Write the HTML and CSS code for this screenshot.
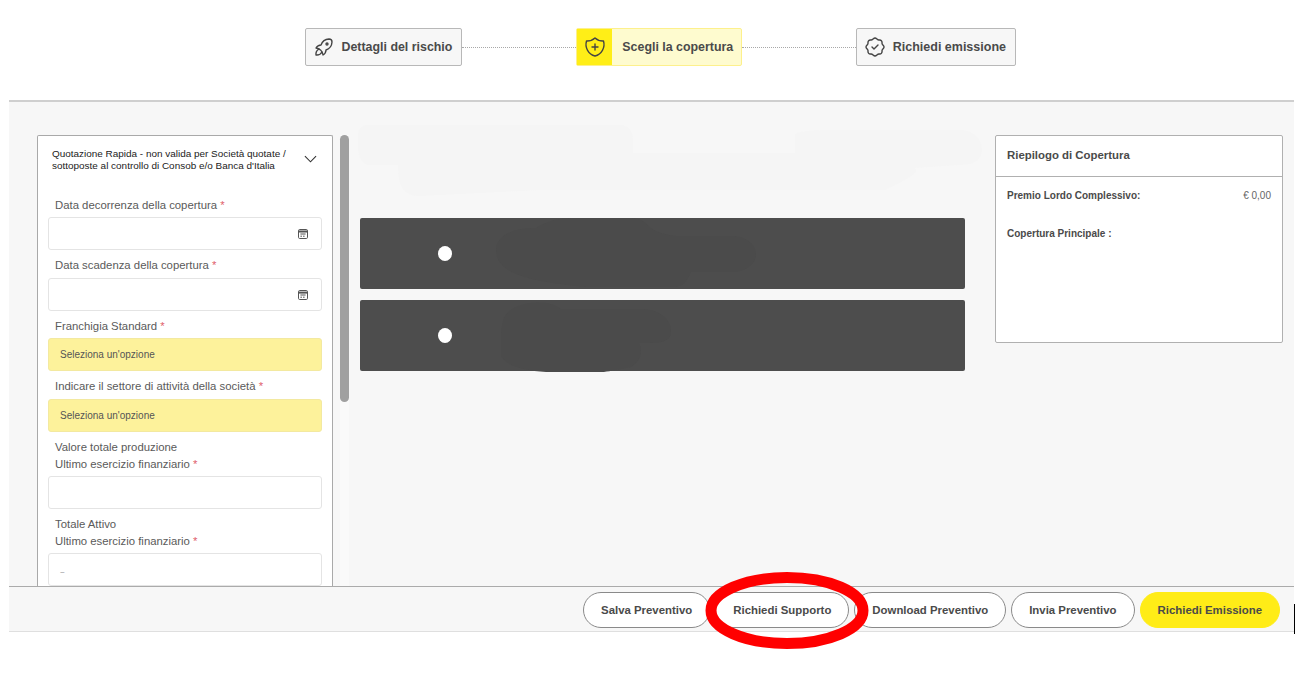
FILE: index.html
```html
<!DOCTYPE html>
<html lang="it">
<head>
<meta charset="utf-8">
<title>Scegli la copertura</title>
<link rel="stylesheet" href="styles.css">
</head>
<body>
<div class="page">
  <nav class="stepper">
    <div class="step">
      <svg class="step-icon" viewBox="0 0 24 24"><path d="M4 13a8 8 0 0 1 7 7a6 6 0 0 0 3 -5a9 9 0 0 0 6 -8a3 3 0 0 0 -3 -3a9 9 0 0 0 -8 6a6 6 0 0 0 -5 3"/><path d="M7 14a6 6 0 0 0 -3 6a6 6 0 0 0 6 -3"/><circle cx="15" cy="9" r="1"/></svg>
      <span>Dettagli del rischio</span>
    </div>
    <div class="connector"></div>
    <div class="step step-active">
      <div class="step-badge">
        <svg class="step-icon" viewBox="0 0 24 24"><path d="M12 3a12 12 0 0 0 8.5 3a12 12 0 0 1 -8.5 15a12 12 0 0 1 -8.5 -15a12 12 0 0 0 8.5 -3"/><path d="M9 12h6M12 9v6"/></svg>
      </div>
      <span>Scegli la copertura</span>
    </div>
    <div class="connector"></div>
    <div class="step step-last">
      <svg class="step-icon" viewBox="0 0 24 24"><path d="M5 7.2a2.2 2.2 0 0 1 2.2 -2.2h1a2.2 2.2 0 0 0 1.55 -.64l.7 -.7a2.2 2.2 0 0 1 3.12 0l.7 .7c.412 .41 .97 .64 1.55 .64h1a2.2 2.2 0 0 1 2.2 2.2v1c0 .58 .23 1.138 .64 1.55l.7 .7a2.2 2.2 0 0 1 0 3.12l-.7 .7a2.2 2.2 0 0 0 -.64 1.55v1a2.2 2.2 0 0 1 -2.2 2.2h-1a2.2 2.2 0 0 0 -1.55 .64l-.7 .7a2.2 2.2 0 0 1 -3.12 0l-.7 -.7a2.2 2.2 0 0 0 -1.55 -.64h-1a2.2 2.2 0 0 1 -2.2 -2.2v-1a2.2 2.2 0 0 0 -.64 -1.55l-.7 -.7a2.2 2.2 0 0 1 0 -3.12l.7 -.7a2.2 2.2 0 0 0 .64 -1.55v-1"/><path d="M9 12l2 2l4 -4"/></svg>
      <span>Richiedi emissione</span>
    </div>
  </nav>

  <main class="main">
    <section class="panel">
      <header class="panel-head">
        <p class="panel-title">Quotazione Rapida - non valida per Società quotate / sottoposte al controllo di Consob e/o Banca d'Italia</p>
        <svg class="chevron" viewBox="0 0 14 8"><path d="M1 1l6 6l6 -6"/></svg>
      </header>
      <div class="field">
        <label class="label">Data decorrenza della copertura <em>*</em></label>
        <div class="input">
          <svg class="cal" viewBox="0 0 10 10"><rect x="0.5" y="0.5" width="9" height="9" rx="1.2"/><path class="cal-band" d="M0.5 2.6h9"/><path d="M2.4 5h5.2M2.4 7.2h1.6M5 7.2h1.6"/></svg>
        </div>
      </div>
      <div class="field">
        <label class="label">Data scadenza della copertura <em>*</em></label>
        <div class="input">
          <svg class="cal" viewBox="0 0 10 10"><rect x="0.5" y="0.5" width="9" height="9" rx="1.2"/><path class="cal-band" d="M0.5 2.6h9"/><path d="M2.4 5h5.2M2.4 7.2h1.6M5 7.2h1.6"/></svg>
        </div>
      </div>
      <div class="field">
        <label class="label">Franchigia Standard <em>*</em></label>
        <div class="input select">Seleziona un'opzione</div>
      </div>
      <div class="field">
        <label class="label">Indicare il settore di attività della società <em>*</em></label>
        <div class="input select">Seleziona un'opzione</div>
      </div>
      <div class="field field-tall">
        <label class="label">Valore totale produzione<br>Ultimo esercizio finanziario <em>*</em></label>
        <div class="input"></div>
      </div>
      <div class="field field-tall">
        <label class="label">Totale Attivo<br>Ultimo esercizio finanziario <em>*</em></label>
        <div class="input input-value">~</div>
      </div>
    </section>

    <div class="scrollbar"><div class="scroll-thumb"></div></div>

    <section class="options">
      <svg class="smudge-top" viewBox="0 0 624 71"><path d="M10 0H262C270 0 275 6 275 15V28H437V10C437 7 450 5 470 5L602 5C615 5 624 14 624 25C624 36 615 40 600 40L557 43C560 46 560 50 527 65L182 65L62 71C48 71 40 65 40 40H12C4 40 0 32 0 22V10C0 4 4 0 10 0Z"/></svg>
      <div class="option">
        <span class="radio"></span>
        <svg class="smudge smudge-a" viewBox="0 0 260 71"><path d="M40 10C50 4 60 0 76 0H136C146 0 150 6 155 10C160 14 170 17 180 18H235C252 18 260 28 260 36C260 46 250 54 235 54H195C192 60 190 67 180 69H90C70 67 40 64 20 56C6 50 0 42 0 32C0 18 15 10 40 10Z"/></svg>
      </div>
      <div class="option">
        <span class="radio"></span>
        <svg class="smudge smudge-b" viewBox="0 0 170 71"><path d="M30 2C45 0 55 4 60 8H140C158 8 170 18 170 30C170 42 160 42 138 42C142 50 140 60 130 66C110 70 100 72 90 72C50 72 10 72 0 55C-2 42 0 30 2 20C4 10 15 4 30 2Z"/></svg>
      </div>
    </section>

    <aside class="summary">
      <h2 class="summary-title">Riepilogo di Copertura</h2>
      <div class="summary-body">
        <div class="summary-row">
          <strong>Premio Lordo Complessivo:</strong>
          <span>€ 0,00</span>
        </div>
        <div class="summary-row summary-row-next">
          <strong>Copertura Principale :</strong>
        </div>
      </div>
    </aside>
  </main>

  <footer class="actions">
    <button class="btn">Salva Preventivo</button>
    <button class="btn">Richiedi Supporto</button>
    <button class="btn">Download Preventivo</button>
    <button class="btn">Invia Preventivo</button>
    <button class="btn btn-primary">Richiedi Emissione</button>
  </footer>
</div>

<svg class="annotation" viewBox="0 0 164 78"><ellipse cx="82" cy="38.5" rx="76" ry="33"/></svg>
<div class="edge-mark"></div>
</body>
</html>
```
FILE: styles.css
```css
* { box-sizing: border-box; }
html, body { margin: 0; padding: 0; height: 100%; overflow: hidden; }
body {
  position: relative;
  background: #fff;
  font-family: "Liberation Sans", Arial, sans-serif;
  color: #4a4a4a;
}
.page { width: 1285px; margin-left: 9px; }

/* Stepper */
.stepper {
  display: flex;
  align-items: center;
  height: 100px;
  padding: 0 0 6px 296px;
}
.step {
  display: flex;
  align-items: center;
  gap: 5.5px;
  height: 38px;
  padding: 0 9px 0 6px;
  background: #f7f7f7;
  border: 1px solid #b8b8b8;
  border-radius: 2px;
  font-size: 12.4px;
  font-weight: 700;
  color: #4a4a4a;
  white-space: nowrap;
}
.step-last { font-size: 12.5px; }
.step-icon {
  width: 24px;
  height: 24px;
  fill: none;
  stroke: #444;
  stroke-width: 1.4;
  stroke-linecap: round;
  stroke-linejoin: round;
  flex: none;
}
.step-active {
  padding: 0 8px 0 0;
  gap: 10px;
  background: #fefbcf;
  border-color: #fdf08c;
}
.step-badge {
  display: flex;
  align-items: center;
  justify-content: center;
  width: 35px;
  height: 36px;
  background: #ffee17;
}
.connector {
  width: 114px;
  border-top: 1px dotted #a8a8a8;
}

/* Main */
.main {
  display: flex;
  align-items: stretch;
  height: 486px;
  padding: 33px 11px 0 28px;
  background: #f7f7f7;
  border-top: 2px solid #cfcfcf;
  overflow: hidden;
}
.panel {
  flex: none;
  width: 296px;
  padding: 0 10px;
  background: #fff;
  border: 1px solid #a9a9a9;
  border-bottom: 0;
  border-radius: 2px 2px 0 0;
  overflow: hidden;
}
.panel-head {
  display: flex;
  align-items: flex-start;
  justify-content: space-between;
  height: 53.8px;
  padding: 12px 5px 0 4px;
}
.panel-title {
  margin: 0;
  width: 240px;
  font-size: 9.95px;
  line-height: 12px;
  color: #222;
}
.chevron {
  width: 13px;
  height: 8px;
  margin-top: 7px;
  fill: none;
  stroke: #333;
  stroke-width: 1.2;
  flex: none;
}
.field { display: flex; flex-direction: column; }
.label {
  display: block;
  padding: 7.1px 0 4.4px 7px;
  font-size: 11.35px;
  line-height: 16px;
  color: #5a5a5a;
}
.label em { font-style: normal; color: #e0606a; }
.field-tall .label { padding: 7.5px 0 2.5px 7px; line-height: 17px; }
.input {
  display: flex;
  align-items: center;
  justify-content: flex-end;
  flex: none;
  height: 33px;
  padding: 0 13px 0 11px;
  background: #fff;
  border: 1px solid #e4e4e4;
  border-radius: 3px;
}
.select {
  justify-content: flex-start;
  background: #fdf29b;
  border-color: #f3e9a0;
  font-size: 10px;
  color: #555;
}
.input-value {
  justify-content: flex-start;
  font-size: 8px;
  color: #888;
  padding-top: 6px;
}
.cal {
  width: 10px;
  height: 10px;
  margin-top: 1px;
  fill: none;
  stroke: #555;
  stroke-width: 1;
}
.cal-band { stroke-width: 2; }

/* Scrollbar */
.scrollbar {
  flex: none;
  width: 9px;
  margin-left: 7px;
  background: #fafafa;
}
.scroll-thumb {
  height: 267px;
  background: #a0a0a0;
  border-radius: 5px;
}

/* Options */
.options {
  position: relative;
  flex: 1;
  display: flex;
  flex-direction: column;
  gap: 11px;
  margin-left: 11px;
  padding-top: 83px;
}
.option {
  position: relative;
  display: flex;
  align-items: center;
  height: 71px;
  padding-left: 78px;
  background: #4d4d4d;
  border-radius: 2px;
}
.radio {
  width: 14px;
  height: 15px;
  background: #fff;
  border-radius: 50%;
}
.smudge-top {
  position: absolute;
  left: -2px;
  top: -10px;
  width: 624px;
  height: 71px;
  fill: #f5f5f5;
}
.smudge {
  position: absolute;
  fill: #4b4b4b;
}
.smudge-a { left: 136px; top: 0; width: 260px; height: 71px; }
.smudge-b { left: 141px; top: 1px; width: 170px; height: 71px; }

/* Summary */
.summary {
  flex: none;
  align-self: flex-start;
  width: 288px;
  height: 208px;
  margin-left: 30px;
  background: #fff;
  border: 1px solid #b0b0b0;
  border-radius: 2px;
}
.summary-title {
  margin: 0;
  height: 41px;
  padding: 0 11px;
  border-bottom: 1px solid #b0b0b0;
  font-size: 11.4px;
  line-height: 39px;
  font-weight: 700;
  color: #4a4a4a;
}
.summary-body { padding: 12px 11px 0 11px; }
.summary-row {
  display: flex;
  justify-content: space-between;
  font-size: 10px;
  line-height: 13px;
  color: #666;
}
.summary-row strong { color: #4a4a4a; }
.summary-row-next { margin-top: 25px; }

/* Footer */
.actions {
  display: flex;
  align-items: center;
  justify-content: flex-end;
  gap: 5px;
  height: 46px;
  padding: 2px 14px 0 0;
  background: #f7f7f7;
  border-top: 1px solid #ababab;
  border-bottom: 1px solid #dfdfdf;
}
.btn {
  height: 36px;
  padding: 0 17px;
  background: #fff;
  border: 1px solid #8a8a8a;
  border-radius: 18px;
  font-family: inherit;
  font-size: 11.4px;
  font-weight: 700;
  color: #4a4a4a;
}
.btn-primary {
  background: #ffec17;
  border-color: #ffec17;
}

/* Annotation over the screenshot */
.annotation {
  position: absolute;
  left: 705px;
  top: 572px;
  width: 164px;
  height: 78px;
  fill: none;
  stroke: #f00;
  stroke-width: 11;
}
.edge-mark {
  position: absolute;
  left: 1294px;
  top: 604px;
  width: 1px;
  height: 30px;
  background: #000;
}
```
